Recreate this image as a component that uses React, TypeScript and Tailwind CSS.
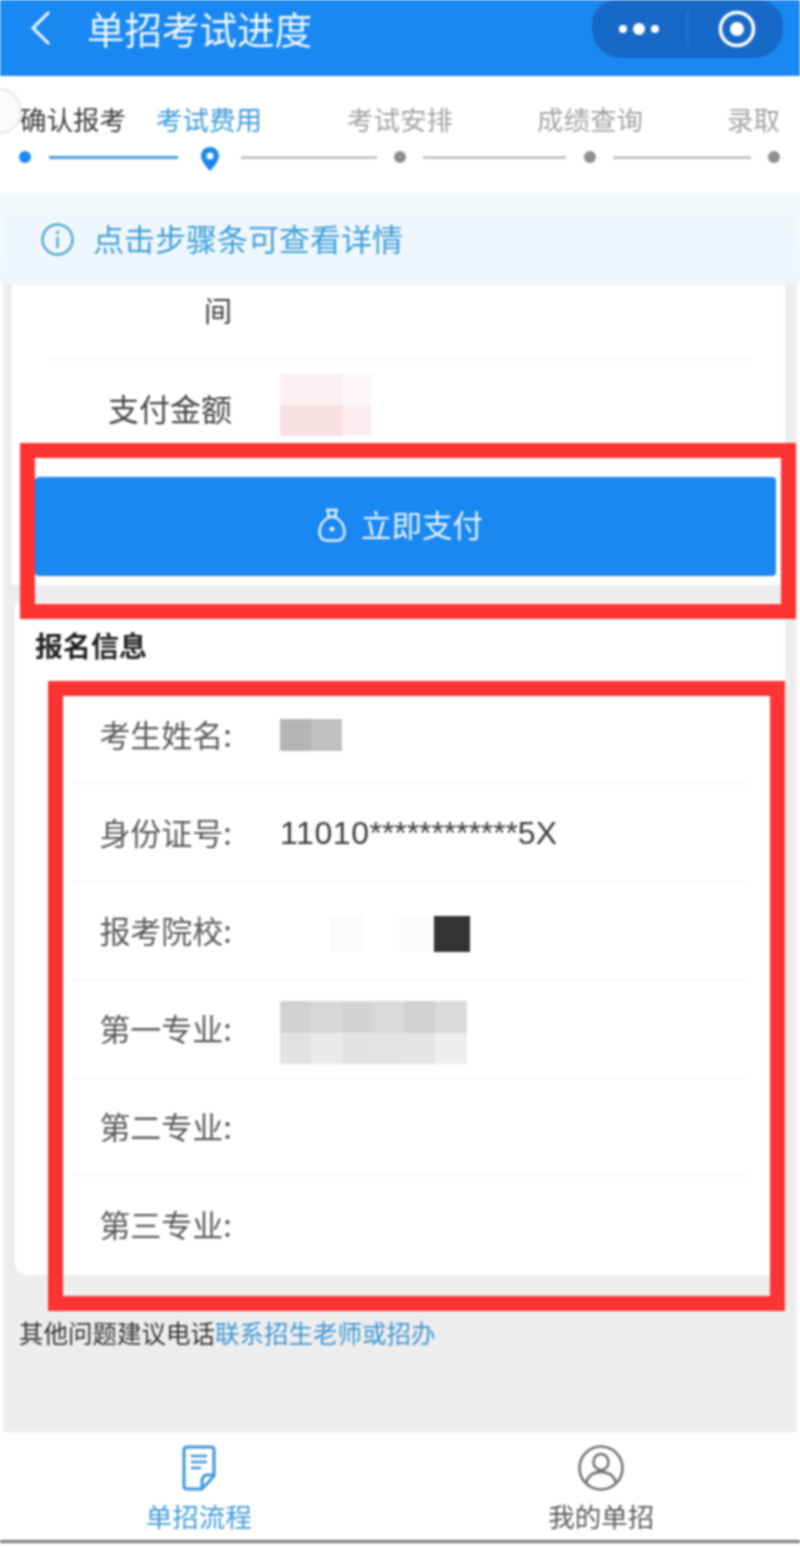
const steps = [
  { label: "确认报考", width: "w-[136px]", color: "text-[#3d3d3d]" },
  { label: "考试费用", width: "w-[191px]", color: "text-[#3f9bdb]" },
  { label: "考试安排", width: "w-[190px]", color: "text-[#a3a3a3]" },
  { label: "成绩查询", width: "w-[190px]", color: "text-[#a3a3a3]" },
  { label: "录取", width: "w-[53px]", color: "text-[#a3a3a3]" },
];

const infoRows = ["考生姓名:", "身份证号:", "报考院校:", "第一专业:", "第二专业:", "第三专业:"];

function NameMask() {
  return (
    <div className="flex">
      <div className="w-[31px] h-[32px] bg-[#b4b4b4]" />
      <div className="w-[31px] h-[32px] bg-[#c0c0c0]" />
    </div>
  );
}

function SchoolMask() {
  return (
    <div className="flex ml-[50px] mt-[6px]">
      <div className="w-[34px] h-[36px] bg-[#fbfbfb]" />
      <div className="w-[35px] h-[36px] bg-white" />
      <div className="w-[35px] h-[36px] bg-[#fbfbfb]" />
      <div className="w-[36px] h-[36px] bg-[#333333]" />
    </div>
  );
}

function MajorMask() {
  return (
    <div className="flex flex-col mt-[8px]">
      <div className="flex h-[32px]">
        <div className="w-[31px] bg-[#d2d2d2]" />
        <div className="w-[31px] bg-[#d8d8d8]" />
        <div className="w-[31px] bg-[#d4d4d4]" />
        <div className="w-[31px] bg-[#d9d9d9]" />
        <div className="w-[31px] bg-[#d2d2d2]" />
        <div className="w-[32px] bg-[#dadada]" />
      </div>
      <div className="flex h-[31px]">
        <div className="w-[31px] bg-[#e2e2e2]" />
        <div className="w-[31px] bg-[#e9e9e9]" />
        <div className="w-[31px] bg-[#e2e2e2]" />
        <div className="w-[31px] bg-[#e3e3e3]" />
        <div className="w-[31px] bg-[#e4e4e4]" />
        <div className="w-[32px] bg-[#eeeeee]" />
      </div>
    </div>
  );
}

function RowValue({ index }: { index: number }) {
  if (index === 0) return <NameMask />;
  if (index === 1) {
    return (
      <span className="text-[32px] text-[#3a3a3a] font-['Liberation_Sans',sans-serif]">
        <span className="tracking-[0.6px]">11010</span>
        <span className="tracking-[-0.1px]">************</span>
        5X
      </span>
    );
  }
  if (index === 2) return <SchoolMask />;
  if (index === 3) return <MajorMask />;
  return null;
}

export default function App() {
  return (
    <div className="relative w-[800px] h-[1547px] overflow-hidden flex flex-col bg-white blur-[0.8px] font-['Noto_Sans_CJK_SC','Noto_Sans',sans-serif]">
      {/* title bar */}
      <header className="h-[76px] shrink-0 bg-[#1a88f2] flex items-start relative">
        <svg width="24" height="36" viewBox="0 0 24 36" className="mt-[10px] ml-[28px]" fill="none" stroke="#f2f8ff" strokeWidth="3">
          <path d="M21 2 L5 18 L21 34" />
        </svg>
        <h1 className="ml-[35px] mt-[6px] text-[37.5px] leading-[44px] text-[#f0f7ff] whitespace-nowrap">单招考试进度</h1>
        <div className="absolute left-[592px] top-0 w-[191px] h-[58px] rounded-b-[29px] rounded-t-[24px] bg-[#1769c8] flex items-center">
          <div className="w-[95px] flex items-center justify-center gap-[6px] pr-[2px]">
            <span className="w-[8px] h-[8px] rounded-full bg-white" />
            <span className="w-[12px] h-[12px] rounded-full bg-white" />
            <span className="w-[8px] h-[8px] rounded-full bg-white" />
          </div>
          <div className="w-px h-[36px] bg-[#3a80d2]" />
          <div className="flex-1 flex items-center justify-center pl-[2px]">
            <svg width="38" height="38" viewBox="0 0 38 38" fill="none">
              <circle cx="19" cy="19" r="16.5" stroke="white" strokeWidth="3.5" />
              <circle cx="19" cy="19" r="7" fill="white" />
            </svg>
          </div>
        </div>
      </header>

      {/* steps */}
      <section className="h-[117px] shrink-0 bg-white relative">
        <div className="absolute -left-[24px] top-[12px] w-[46px] h-[46px] rounded-full border-2 border-[#e6e6e6] bg-[#fbfbfb]" />
        <div className="relative flex pl-[20px] pt-[25px] h-[63px] text-[26.5px] leading-[36px] whitespace-nowrap">
          {steps.map((step) => (
            <div key={step.label} className={`${step.width} ${step.color}`}>
              {step.label}
            </div>
          ))}
        </div>
        <div className="flex items-center pl-[19px] h-[36px]">
          <span className="w-[12px] h-[12px] rounded-full bg-[#1a88f2]" />
          <span className="ml-[18px] w-[129px] h-[3px] bg-[#4a9fdc]" />
          <svg width="20" height="26" viewBox="0 0 20 26" className="ml-[22px] mt-[4px]">
            <path d="M10 1 C4.5 1 1 5 1 10 C1 16 10 25 10 25 C10 25 19 16 19 10 C19 5 15.5 1 10 1 Z" fill="#1a88f2" />
            <circle cx="10" cy="10" r="3.5" fill="white" />
          </svg>
          <span className="ml-[21px] w-[136px] h-[3px] bg-[#c4c4c4]" />
          <span className="ml-[17px] w-[12px] h-[12px] rounded-full bg-[#8f8f8f]" />
          <span className="ml-[17px] w-[143px] h-[3px] bg-[#c4c4c4]" />
          <span className="ml-[18px] w-[12px] h-[12px] rounded-full bg-[#8f8f8f]" />
          <span className="ml-[17px] w-[138px] h-[3px] bg-[#c4c4c4]" />
          <span className="ml-[17px] w-[12px] h-[12px] rounded-full bg-[#8f8f8f]" />
        </div>
      </section>

      {/* notice */}
      <div className="h-[92px] shrink-0 bg-gradient-to-b from-[#f2f8fc] to-[#ecf7fe] flex items-center pl-[41px]">
        <svg width="33" height="33" viewBox="0 0 33 33" fill="none" stroke="#55a8cf">
          <circle cx="16.5" cy="16.5" r="15" strokeWidth="2.5" />
          <path d="M16.5 14 V25" strokeWidth="2.5" />
          <circle cx="16.5" cy="9.5" r="1.3" fill="#55a8cf" />
        </svg>
        <span className="ml-[19px] mb-[2px] text-[31px] leading-[44px] text-[#3f9fd8] whitespace-nowrap">点击步骤条可查看详情</span>
      </div>

      {/* content */}
      <main className="flex-1 mx-[3px] bg-[#eeedee]">
        <div className="ml-[9px] mr-[12px] h-[300px] bg-white flex flex-col">
          <div className="h-[75px] border-b border-[#f0f0f0] mx-[35px] flex">
            <div className="w-[185px] pt-[6px] text-right text-[28px] leading-[38px] text-[#3a3a3a]">间</div>
          </div>
          <div className="h-[92px] flex items-start">
            <div className="w-[220px] pt-[26px] text-right text-[31px] leading-[44px] text-[#444444] whitespace-nowrap">支付金额</div>
            <div className="ml-[48px] mt-[14px] flex flex-col">
              <div className="flex h-[31px]">
                <div className="w-[62px] bg-[#fbeff1]" />
                <div className="w-[30px] bg-[#fdf6f7]" />
              </div>
              <div className="flex h-[31px]">
                <div className="w-[62px] bg-[#f9dfe4]" />
                <div className="w-[30px] bg-[#fcecef]" />
              </div>
            </div>
          </div>
          <div className="ml-[23px] mr-[9px] mt-[25px] h-[99px] rounded-[4px] bg-[#1a88f2] flex items-center justify-center pr-[10px]">
            <svg width="28" height="34" viewBox="0 0 28 34" fill="none" stroke="#e4f1ff" strokeWidth="2.5" className="mb-[3px]">
              <path d="M9.5 2 H18.5 L17 9 H11 Z" />
              <path d="M11 9 C4 13 1.5 19 1.5 24 C1.5 30 5 32.5 9 32.5 H19 C23 32.5 26.5 30 26.5 24 C26.5 19 24 13 17 9" />
              <circle cx="14" cy="21" r="2.5" fill="#e4f1ff" stroke="none" />
            </svg>
            <span className="ml-[15px] mb-[5px] text-[30.5px] leading-[40px] text-[#e8f4ff] whitespace-nowrap">立即支付</span>
          </div>
        </div>

        <section className="mt-[18px] ml-[12px] mr-[12px] h-[672px] bg-white rounded-b-[12px]">
          <h2 className="h-[83px] pl-[20px] pt-[25px] text-[28px] leading-[34px] font-bold text-[#222222]">报名信息</h2>
          {infoRows.map((label, i) => (
            <div key={label} className={`h-[98px] ml-[55px] mr-[37px] flex items-center ${i < 5 ? "border-b border-[#f3f3f3]" : ""}`}>
              <div className="w-[162px] pb-[2px] text-right text-[31px] leading-[44px] text-[#5a5a5a] whitespace-nowrap">{label}</div>
              <div className="ml-[48px]">
                <RowValue index={i} />
              </div>
            </div>
          ))}
        </section>

        <p className="mt-[41px] pl-[16px] text-[24.5px] leading-[34px] text-[#333333] whitespace-nowrap">
          其他问题建议电话<span className="text-[#3d97d3]">联系招生老师或招办</span>
        </p>
      </main>

      {/* tab bar */}
      <nav className="h-[108px] shrink-0 bg-white flex">
        <div className="flex-1 flex flex-col items-center pt-[13px] pr-[3px]">
          <svg width="34" height="46" viewBox="0 0 34 46" fill="none" stroke="#3d97d8" strokeWidth="3">
            <path d="M5 2 H29 Q32 2 32 5 V31 L20 44 H5 Q2 44 2 41 V5 Q2 2 5 2 Z" strokeLinejoin="round" />
            <path d="M32 30 H24 Q21 31 20 35 V44" strokeLinejoin="round" />
            <path d="M9 11 H25 M9 17 H25 M9 23 H19" strokeWidth="2.5" />
          </svg>
          <span className="mt-[7px] text-[26.5px] leading-[36px] text-[#3f9bdb] whitespace-nowrap">单招流程</span>
        </div>
        <div className="flex-1 flex flex-col items-center pt-[13px] pl-[2px]">
          <svg width="46" height="46" viewBox="0 0 46 46" fill="none" stroke="#707070" strokeWidth="2.5">
            <circle cx="23" cy="23" r="21.5" />
            <ellipse cx="23" cy="17" rx="7.5" ry="8" />
            <path d="M8 38 C10 30 16 27 23 27 C30 27 36 30 38 38" />
          </svg>
          <span className="mt-[7px] text-[26.5px] leading-[36px] text-[#5c5c5c] whitespace-nowrap">我的单招</span>
        </div>
      </nav>
      <div className="h-[3px] shrink-0 bg-[#7c7c7c]" />
      <div className="h-[4px] shrink-0 bg-white" />

      {/* red annotation frames */}
      <div className="absolute left-[20px] top-[443px] w-[776px] h-[176px] border-[15px] border-[#fe3434]" />
      <div className="absolute left-[48px] top-[681px] w-[737px] h-[630px] border-[15px] border-[#fe3434]" />
    </div>
  );
}
